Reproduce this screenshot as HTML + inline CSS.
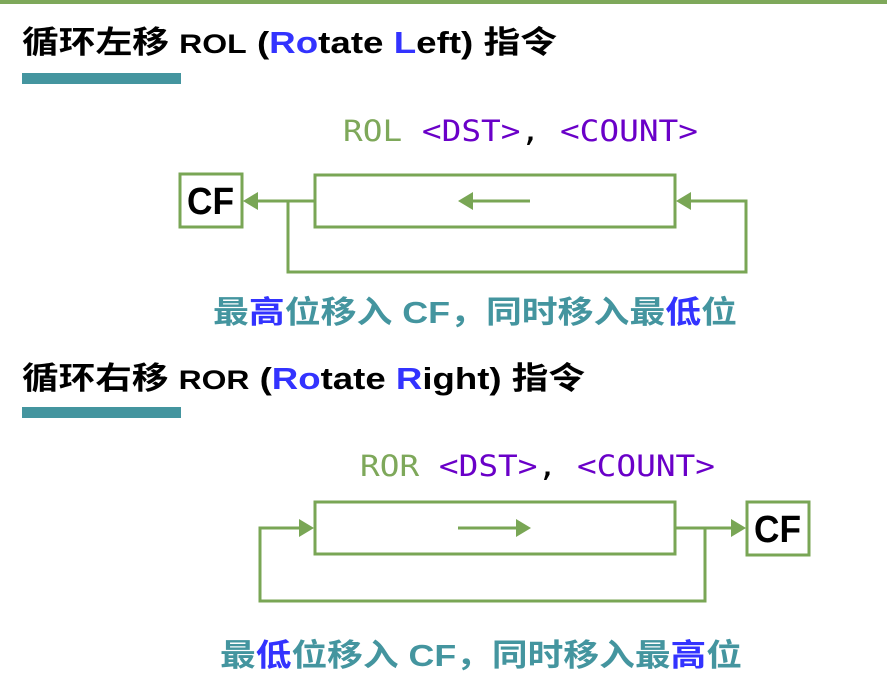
<!DOCTYPE html>
<html><head><meta charset="utf-8"><style>
html,body{margin:0;padding:0;background:#fff;width:887px;height:691px;overflow:hidden}
svg text{font-family:"Liberation Sans","Noto Sans CJK SC",sans-serif;font-weight:bold}
svg text.m{font-family:"DejaVu Sans Mono","Liberation Mono",monospace;font-weight:normal}
</style></head><body>
<svg width="887" height="691" viewBox="0 0 887 691" xmlns="http://www.w3.org/2000/svg">
<rect x="0" y="0" width="887" height="4" fill="#7ea85a"/>
<text x="22" y="53" font-size="31" fill="#000" textLength="535" lengthAdjust="spacingAndGlyphs">循环左移 <tspan font-size="27">ROL</tspan> (<tspan fill="#3333ff">Ro</tspan>tate <tspan fill="#3333ff">L</tspan>eft) 指令</text>
<rect x="22" y="73" width="159" height="11" fill="#44959f"/>
<text class="m" x="343" y="141" font-size="29" textLength="355" lengthAdjust="spacingAndGlyphs"><tspan fill="#7ea85a">ROL </tspan><tspan fill="#6a00c8">&lt;DST&gt;</tspan><tspan fill="#000">, </tspan><tspan fill="#6a00c8">&lt;COUNT&gt;</tspan></text>
<g fill="none" stroke="#79a655" stroke-width="3">
<rect x="180" y="174" width="62" height="53" fill="#fff"/>
<rect x="315" y="175" width="360" height="52"/>
<path d="M530 201 H465"/><path d="M314 201 H250"/>
<path d="M288 201 V272 H746 V201 H685"/>
</g>
<g fill="#79a655">
<path d="M458 201 l15 -9 v18z"/><path d="M243 201 l15 -9 v18z"/><path d="M676 201 l15 -9 v18z"/>
</g>
<text x="187" y="214" font-size="38" fill="#000" textLength="47" lengthAdjust="spacingAndGlyphs">CF</text>
<text x="213" y="323" font-size="31" fill="#44959f" textLength="524" lengthAdjust="spacingAndGlyphs">最<tspan fill="#3333ff">高</tspan>位移入 CF，同时移入最<tspan fill="#3333ff">低</tspan>位</text>

<text x="22" y="389" font-size="31" fill="#000" textLength="563" lengthAdjust="spacingAndGlyphs">循环右移 <tspan font-size="27">ROR</tspan> (<tspan fill="#3333ff">Ro</tspan>tate <tspan fill="#3333ff">R</tspan>ight) 指令</text>
<rect x="22" y="407" width="159" height="11" fill="#44959f"/>
<text class="m" x="360" y="476" font-size="29" textLength="355" lengthAdjust="spacingAndGlyphs"><tspan fill="#7ea85a">ROR </tspan><tspan fill="#6a00c8">&lt;DST&gt;</tspan><tspan fill="#000">, </tspan><tspan fill="#6a00c8">&lt;COUNT&gt;</tspan></text>
<g fill="none" stroke="#79a655" stroke-width="3">
<rect x="315" y="502" width="360" height="52"/>
<rect x="747" y="502" width="62" height="53" fill="#fff"/>
<path d="M458 528 H518"/><path d="M676 528 H733"/>
<path d="M705 528 V601 H260 V528 H301"/>
</g>
<g fill="#79a655">
<path d="M531 528 l-15 -9 v18z"/><path d="M746 528 l-15 -9 v18z"/><path d="M314 528 l-15 -9 v18z"/>
</g>
<text x="754" y="542" font-size="38" fill="#000" textLength="47" lengthAdjust="spacingAndGlyphs">CF</text>
<text x="220" y="666" font-size="31" fill="#44959f" textLength="522" lengthAdjust="spacingAndGlyphs">最<tspan fill="#3333ff">低</tspan>位移入 CF，同时移入最<tspan fill="#3333ff">高</tspan>位</text>
</svg>
</body></html>
